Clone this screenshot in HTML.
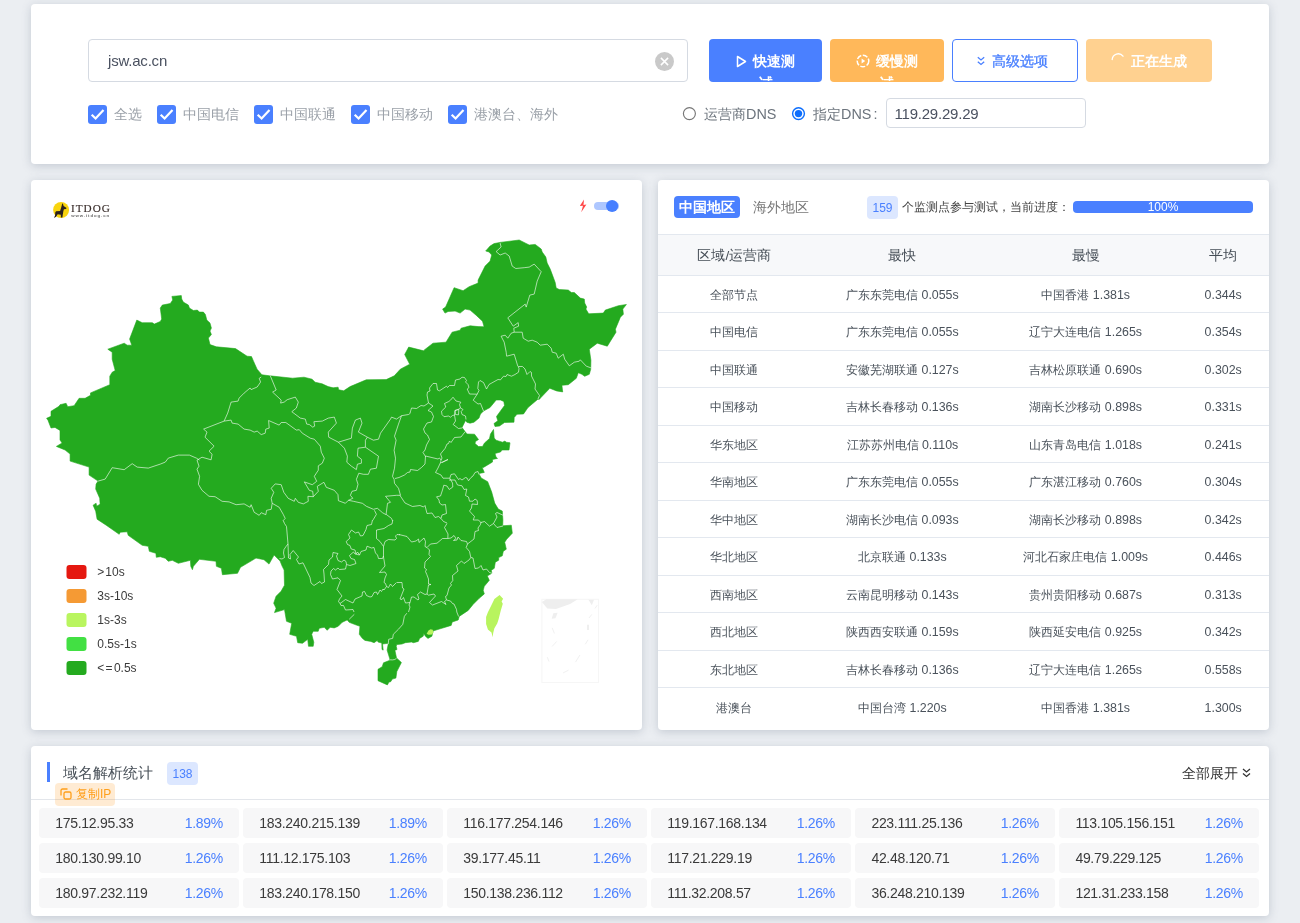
<!DOCTYPE html>
<html lang="zh">
<head>
<meta charset="utf-8">
<title>ITDOG DNS</title>
<style>
*{box-sizing:border-box;margin:0;padding:0}
html,body{width:1300px;height:923px;overflow:hidden}
body{background:#ebeef2;font-family:"Liberation Sans",sans-serif;color:#444;position:relative;font-size:14px}
.card{position:absolute;will-change:transform;background:#fff;border-radius:4px;box-shadow:0 2px 10px rgba(105,118,140,.30)}
.abs{position:absolute}
/* top card */
#top{left:31px;top:4px;width:1238px;height:160px}
.inp{position:absolute;border:1px solid #d5dae2;border-radius:4px;background:#fff}
#domain{left:57px;top:35px;width:600px;height:43px;font-size:15px;letter-spacing:-0.2px;line-height:42px;padding-left:19px;color:#4a5160}
#clear{position:absolute;left:566px;top:11.5px;width:19px;height:19px;border-radius:50%;background:#c9c9c9}
#clear svg{position:absolute;left:0;top:0}
.btn{position:absolute;top:35px;height:43px;border-radius:4px;overflow:hidden;text-align:center;font-size:14.4px;line-height:21px;padding-top:11px;color:#fff;font-weight:bold;border:1px solid transparent}
.cb{position:absolute;top:101px;width:19px;height:19px;border-radius:3px;background:#4a80ff}
.cb svg{position:absolute;left:0;top:0}
.cl{position:absolute;top:100px;line-height:21px;font-size:14.4px;color:#9aa0a8;white-space:nowrap}
.radio{position:absolute;top:103px;width:13px;height:13px;border-radius:50%;border:1px solid #777;background:#fff}
.radio.on{border:1px solid #1a73e8}
.radio.on:after{content:"";position:absolute;left:2px;top:2px;width:7px;height:7px;border-radius:50%;background:#1a73e8}
/* table card */
#tbl{left:658px;top:180px;width:611px;height:550px;overflow:hidden}
#map{left:31px;top:180px;width:611px;height:550px;overflow:hidden}
.th{position:absolute;left:0;top:54px;width:611px;height:42px;background:#f7f8fa;border-top:1px solid #e3e8ef;border-bottom:1px solid #e3e8ef;font-size:13.5px;line-height:42px;color:#444c55}
.tr{position:absolute;left:0;width:611px;border-bottom:1px solid #e3e8ef;font-size:12.4px;line-height:39px;color:#4a525b}
.c1,.c2,.c3,.c4{position:absolute;top:0;text-align:center;white-space:nowrap}
.c1{left:0;width:152.75px}.c2{left:152.75px;width:183.3px}.c3{left:336.05px;width:183.3px}.c4{left:519.35px;width:91.65px}
/* bottom card */
#bot{left:31px;top:746px;width:1238px;height:170px}
.ip{position:absolute;width:199.6px;height:30px;background:#f7f7f8;border-radius:4px;font-size:14px;letter-spacing:-0.3px;line-height:31px;color:#3a3a3a}
.ip b{position:absolute;left:16px;font-weight:normal}
.ip i{position:absolute;right:16px;font-style:normal;color:#4a80ff}
</style>
</head>
<body>

<!-- TOP CARD -->
<div class="card" id="top">
  <div class="inp" id="domain">jsw.ac.cn
    <div id="clear"><svg width="19" height="19" viewBox="0 0 19 19"><path d="M5.9 5.9 L13.1 13.1 M13.1 5.9 L5.9 13.1" stroke="#fff" stroke-width="1.5" fill="none"/></svg></div>
  </div>
  <div class="btn" style="left:678px;width:113px;background:#4a80ff">
    <svg width="11" height="13" viewBox="0 0 11 13" style="vertical-align:-2px;margin-right:6px"><path d="M1.5 1.5 L9.5 6.5 L1.5 11.5 Z" fill="none" stroke="#fff" stroke-width="1.5" stroke-linejoin="round"/></svg>快速测<span style="display:block;margin-top:1px">试</span>
  </div>
  <div class="btn" style="left:799px;width:114px;background:#ffb85a">
    <svg width="14" height="14" viewBox="0 0 14 14" style="vertical-align:-2px;margin-right:5.5px"><circle cx="7" cy="7" r="5.8" fill="none" stroke="#fff" stroke-width="1.5" stroke-dasharray="5 1.6"/><path d="M5.6 4.4 L9.2 7 L5.6 9.6 Z" fill="#fff"/></svg>缓慢测<span style="display:block;margin-top:1px">试</span>
  </div>
  <div class="btn" style="left:921px;width:126px;background:#fff;border-color:#4a80ff;color:#4a80ff;font-weight:normal;padding-right:5px;-webkit-text-stroke:0.3px #4a80ff">
    <svg width="8" height="10" viewBox="0 0 8 10" style="vertical-align:0px;margin-right:7px"><path d="M0.8 1.2 L4 4 L7.2 1.2 M0.8 5.7 L4 8.5 L7.2 5.7" fill="none" stroke="#4a80ff" stroke-width="1.3"/></svg>高级选项
  </div>
  <div class="btn" style="left:1055px;width:126px;background:#ffd190">
    <svg width="14" height="14" viewBox="0 0 14 14" style="vertical-align:-1px;margin-right:6px"><path d="M1.2 6.5 A6 6 0 0 1 12 3.2" fill="none" stroke="#fff" stroke-width="1.3" stroke-linecap="round"/></svg>正在生成
  </div>

  <div class="cb" style="left:57px"><svg width="19" height="19" viewBox="0 0 19 19"><path d="M3.7 9.7 L7.6 13.5 L15.5 4.9" stroke="#fff" stroke-width="2.2" fill="none"/></svg></div>
  <div class="cl" style="left:83px">全选</div>
  <div class="cb" style="left:126px"><svg width="19" height="19" viewBox="0 0 19 19"><path d="M3.7 9.7 L7.6 13.5 L15.5 4.9" stroke="#fff" stroke-width="2.2" fill="none"/></svg></div>
  <div class="cl" style="left:152px">中国电信</div>
  <div class="cb" style="left:223px"><svg width="19" height="19" viewBox="0 0 19 19"><path d="M3.7 9.7 L7.6 13.5 L15.5 4.9" stroke="#fff" stroke-width="2.2" fill="none"/></svg></div>
  <div class="cl" style="left:249px">中国联通</div>
  <div class="cb" style="left:320px"><svg width="19" height="19" viewBox="0 0 19 19"><path d="M3.7 9.7 L7.6 13.5 L15.5 4.9" stroke="#fff" stroke-width="2.2" fill="none"/></svg></div>
  <div class="cl" style="left:346px">中国移动</div>
  <div class="cb" style="left:417px"><svg width="19" height="19" viewBox="0 0 19 19"><path d="M3.7 9.7 L7.6 13.5 L15.5 4.9" stroke="#fff" stroke-width="2.2" fill="none"/></svg></div>
  <div class="cl" style="left:443px">港澳台、海外</div>

  <svg class="abs" style="left:651px;top:102px" width="15" height="15" viewBox="0 0 15 15"><circle cx="7.4" cy="7.6" r="6" fill="#fff" stroke="#767676" stroke-width="1.15"/></svg>
  <div class="cl" style="left:673px;color:#6b737c">运营商DNS</div>
  <svg class="abs" style="left:760px;top:102px" width="15" height="15" viewBox="0 0 15 15"><circle cx="7.5" cy="7.6" r="5.9" fill="#fff" stroke="#0d6efd" stroke-width="1.4"/><circle cx="7.5" cy="7.6" r="3.7" fill="#0d6efd"/></svg>
  <div class="cl" style="left:782px;color:#6b737c">指定DNS<span style="margin-left:2px">:</span></div>
  <div class="inp" style="left:855px;top:94px;width:200px;height:30px;font-size:15px;letter-spacing:-0.21px;line-height:29px;padding-left:7.5px;color:#4a5160">119.29.29.29</div>
</div>

<!-- MAP CARD -->
<div class="card" id="map">
<svg style="position:absolute;left:0;top:0" width="611" height="550" viewBox="31 180 611 550">
<path d="M60 430.4 L55 427.4 L51 428 L48 420.3 L46.6 418.3 L51 416.3 L51 411.3 L59 406.3 L60 404.7 L66.1 403.3 L67.7 406.7 L74.1 405.7 L79.1 398.3 L85.1 398.3 L90.5 395.3 L90.5 392.9 L109.8 384.7 L109.8 376.2 L112.2 372.2 L115.2 370.6 L112.2 359.2 L112.2 352.2 L107.8 349.2 L124.2 343.2 L127.2 345.2 L131.8 345.2 L129.6 339.1 L136.8 320.1 L142.2 322.7 L152.3 322.7 L154.3 324.1 L160.3 321.5 L161.7 319.1 L160.3 308.1 L162.3 305.1 L170.3 303.5 L172.7 300 L171.9 296.4 L181.3 295.6 L181.7 299 L183.3 302.1 L188.4 305.1 L189.4 308.1 L193.4 310.5 L197.4 310.1 L199.4 312.1 L203.4 312.1 L205.4 314.5 L206.8 320.1 L210 323.1 L211.4 328.1 L210 331.1 L211.4 334.5 L208.4 338.1 L210 344.6 L216.4 346.8 L235.5 348.6 L247.1 356.2 L251.5 356.6 L253.5 361.2 L257.1 369.2 L261.9 374.8 L269.6 375.8 L292.6 378.2 L304 377.2 L312.1 379.2 L315.1 382.2 L322.1 383.8 L328.1 386.6 L333.1 387.8 L338.1 387.2 L338.7 389.8 L343.7 390.8 L350.1 386.6 L366.2 379.8 L386.2 379.6 L394.3 375.8 L400.3 369.2 L409.7 364.2 L404.7 354.5 L408.7 347.1 L424.7 351.1 L424 350.2 L433 343.2 L446 342.2 L452.1 332.2 L460.1 330.2 L461.1 328.2 L470.1 325.8 L478.1 326.6 L484.1 326.8 L482.5 321.2 L476.1 315.2 L470.1 310.1 L465.1 309.1 L460.1 313.1 L455.1 311.1 L448.1 311.5 L445 313.1 L442.6 309.1 L445.6 307.1 L454.1 287.7 L463.1 290.7 L469.1 286.7 L478.1 283.1 L478.1 280.1 L485.1 266.1 L490.1 261.1 L491.7 255 L489.1 252 L485.7 251 L490.1 246 L494.1 243.6 L500.1 242.4 L519.2 240 L529.2 245 L535.2 244.4 L541.2 249 L542.2 252 L545.8 257 L547.2 263.1 L550.2 269.1 L553.2 277.1 L555.2 282.5 L556.2 288.1 L559.3 289.5 L568.3 290.1 L571.3 292.5 L574.3 292.5 L580.3 298.1 L584.3 299.1 L584.7 303.1 L586.7 307.1 L585.9 309.1 L588.7 313.8 L603.3 313.1 L605.3 310.1 L618.4 305.7 L626.4 304.5 L622.8 309.1 L623.4 314.2 L620.4 317.2 L615.4 329.2 L616 332.2 L607.3 346.2 L597.3 343.2 L589.3 349.2 L590.9 360.2 L590.7 369.3 L589.3 374.3 L584.7 376.3 L581.9 374.3 L578.3 372.7 L576.3 378.3 L568.3 384.7 L561.9 385.3 L562.7 391.9 L556.6 390.9 L549.8 388.3 L540.2 398.3 L540 399 L537.5 399.5 L528 407.5 L523.5 414 L517 414.2 L514.2 417.5 L514 422.2 L504.5 422.5 L499.5 426 L495 426.5 L494 423.5 L497.8 420.8 L496.5 416.5 L504.5 405.5 L503.8 401.5 L500.5 400 L496.2 400 L490 407.5 L483.5 411 L480.5 414 L479 418 L474 422.2 L470 423.2 L466.8 422.2 L465.5 420.5 L462 427.5 L465 431.5 L467 434 L474.5 434.2 L478.5 439.5 L475.5 441.5 L475 443.5 L478.5 446.5 L482.5 446.5 L484.5 443 L489.5 438.5 L490.5 434 L493.5 429.5 L494.2 438 L496 440.2 L502.5 442.2 L505 441 L506 442.2 L510 442.8 L509 450 L502 450 L500.5 452 L495 453.5 L496 457 L497.5 458.4 L492.5 459.4 L492.5 462 L483.5 467.4 L482.2 467.4 L484.3 472.4 L478.8 473.6 L481.2 478 L487.7 481.7 L491.7 492.1 L494.7 503.1 L498.3 509.1 L502.3 511.1 L502.9 520.1 L502.7 525.8 L511.3 525.2 L512.3 533.2 L506.7 539.2 L504.7 542.2 L506.3 549.2 L503.3 551.2 L502.3 555.8 L498.7 557.6 L498.7 560.2 L495.3 562.2 L494.3 568.3 L491.3 570.3 L491.9 573.3 L487.3 575.9 L489.3 580.3 L484.3 586.3 L483.2 590.3 L484.3 593.9 L479.2 598.3 L473.2 604.3 L468.2 610.4 L459.2 616.4 L458.2 620 L452.2 622 L451.2 625.4 L440.1 628.8 L433.7 630.8 L433.4 630.3 L432.4 634 L431.9 636.2 L428 638.4 L425.4 636.2 L423.8 633.5 L423.2 636.2 L419.6 638.4 L418.3 641.4 L413.4 642.7 L411.5 642 L405.3 642.7 L402 644 L396.8 644.6 L396.2 646.2 L397 649.5 L394.9 650.3 L396.5 657.9 L401.4 662.5 L396.8 671.6 L395.9 678.1 L392.3 679.1 L390.7 681.7 L389 682 L387.4 684.9 L378 680.7 L378 669.3 L382.2 666.7 L383.5 662.8 L389.4 660.5 L389.7 658.6 L387.1 650.1 L388.4 643.3 L382.5 644 L383.2 650.1 L382 649.5 L381.8 643 L378 642 L377.3 640.4 L374.1 642.7 L370.8 641.4 L365 640.4 L362.3 638.3 L359.3 634.3 L359.9 626.3 L354.3 624.3 L349.2 622.3 L347.2 619.9 L342.2 622.3 L338.2 626.3 L334.2 627.9 L330.2 627.3 L327.2 630.3 L324.2 627.3 L319.2 628.3 L318.2 631.3 L313.2 631.3 L311.7 634.3 L313.8 642.3 L313.2 646.3 L308.5 646.3 L307.7 639.3 L302.5 643.3 L297.7 642.7 L296.5 636.3 L289.7 634.3 L291.7 623.3 L286.5 621.3 L284.5 609.6 L274.5 612.6 L276.1 608.2 L273.7 603.2 L276.1 596.2 L281.1 591.2 L284.5 585.2 L284.1 570.1 L282.1 566.1 L280.1 561.1 L274.1 555.1 L269 564.1 L264 559.7 L256 558.1 L240.5 567.3 L237.5 573.3 L222.4 574.7 L221.4 568.3 L216.4 566.3 L216 561.3 L199.4 559.3 L193.4 566.3 L192.4 569.7 L190.8 566.3 L190.4 560.3 L178.3 563.3 L172.3 560.3 L168.3 561.3 L165.3 558.3 L160.3 556.7 L156.3 557.3 L155.9 553.3 L149.3 551.3 L148.3 546.3 L142.2 545.3 L128.2 535.3 L127.2 531.8 L120.2 532.2 L119.2 534.3 L106.2 525.2 L97.1 519.2 L95.7 511.2 L93.1 505.2 L96.1 503.2 L96.7 506.2 L100.1 504.2 L99.7 498.2 L95.7 489.1 L96.1 484.1 L98.1 481.1 L89.1 475.1 L89.1 467.1 L70.1 461.1 L70.1 454.1 L65.1 450 L56.4 446.4 L62.1 443 L60 440Z" fill="#24aa1f" stroke="#24aa1f" stroke-width="0.6" stroke-linejoin="round"/>
<path d="M270.2 375.6 L276.2 390 L272.6 392.1 L281.2 400.1 L280.6 403.1 L284.2 402.1 L287.2 399.7 L295.3 397.1 L298.3 402.1 L296.3 408.1 L291.8 411.7 L300.3 418.1 L305.3 419.1 L306.7 424.1 L309.3 424.5 L312.7 427.1 L314.7 426.1 L313.9 421.7 L322.3 421.1 L328.3 418.1 L334.3 417.1 L336.4 423.1 L328.3 432.1 L328.7 437.2 L338.4 442.2 M261.2 377 L259.2 378.4 L260.6 382 L257.2 387 L251.1 389.6 L250.1 388 L244.1 393.1 L239.1 398.1 L238.1 401.1 L231.1 402.1 L227.7 413.1 L224.1 421.1 M224.1 421.1 L203.6 429.1 L207 432.1 L205 437.2 L214.1 446.2 L209 451.2 L212.1 454.2 L211.1 459.8 L202 457.2 L197 460.2 M224.1 421.1 L231.1 420.1 L232.1 423.1 L238.1 424.1 L244.1 429.1 L250.1 430.1 L254.2 432.1 L257.2 431.1 L261.2 434.6 L265.2 433.2 L265.8 429.1 L269.2 428.1 L268.6 420.5 L279.2 425.1 L281.2 422.5 L285.8 422.5 L296.3 430.1 L299.3 429.7 L302.3 433.2 L310.3 438.2 L314.3 439.2 L320.3 446.2 L321.3 452.2 L324.3 458.2 L322.3 463.2 L318.3 465.8 L318.3 470.2 L314.3 476.3 L316.7 481.3 L312.3 484.7 L304.3 481.9 L309.3 490.3 L312.7 491.3 L313.3 496.7 M197 460.2 L199 466.2 L197 469.2 L199.6 476.3 L198.4 484.3 L202 490.3 L209 496.3 L215.1 496.7 L222.1 501.3 L229.1 501.9 L236.1 504.7 L244.1 503.9 L250.1 507.3 L251.1 504.7 L254.2 512.3 L259.2 515.3 L261.2 512.7 L265.8 514.7 L266.6 510.3 L271.2 509.3 L272.2 503.3 M272.2 503.3 L271.2 498.3 L273.8 492.3 L271.2 488.3 L275.2 483.9 L281.2 484.7 L283.8 492.3 L288.2 498.3 L294.3 501.3 L295.3 498.3 L298.3 502.3 L303.3 503.9 L308.3 501.3 L307.9 496.3 L313.3 496.7 M272.2 503.3 L279.2 507.3 L283.2 514.3 L285.2 518.4 L283.8 520 M313.3 496.7 L318.3 491.3 L317.3 486.3 L323.9 482.3 L326.3 487.3 L334.3 490.3 L338 494.7 L338.4 500.7 L345.4 503.3 L348.4 500.3 M365.4 447.2 L378.5 456.2 L376.4 468.2 L370.4 469.2 L368.4 474.3 L363.4 474.3 L358.8 473.2 L356.4 479.3 L358 484.3 L356.4 490.3 L352 491.3 L350.4 495.3 L352.8 498.3 L348.4 500.3 M338.4 442.2 L351.4 438.2 L352.4 428.1 L355.4 420.1 L360.4 418.1 L362 423.1 L358.4 432.1 L367.4 437.2 L365.4 440.2 L365.4 447.2 L358 448.2 L357.4 456.2 L361.4 459.2 L361.4 463.2 L357.4 464.2 L356.4 469.6 L351.4 466.2 L346.8 462.2 L347.4 456.2 L344.4 448.2 L338.4 442.2 M367.4 437.2 L373.4 440.2 L378.5 439.2 L380.5 433.2 L390.5 419.1 L391.5 417.1 L396.5 419.1 L401.5 415.7 M401.5 415.7 L398.5 424.1 L394.5 436.2 L396.1 440.2 L394.1 450.2 L395.5 458.2 L394.5 468.2 L392.5 476.3 L394.1 479.3 M401.5 415.7 L408.5 414.5 L410.5 413.1 M394.1 479.3 L394.5 483.3 L398.5 488.3 L400.5 495.3 M400.5 495.3 L396.5 495.3 L385.5 496.3 L390.5 502.3 L387.5 503.3 L386.1 514.3 L391.5 518.4 L392.5 520.8 M348.4 500.3 L353.4 501.3 L362.4 503.3 L366.4 506.3 L373.4 509.3 L377.4 508.3 L382.5 512.7 L386.1 514.7 M374.4 510.3 L376.4 514.3 L373.4 519.4 L372.8 520.4 M199.4 460.1 L196.4 458.1 L189.4 455.1 L178.3 455.1 L168.3 458.1 L165.3 462.1 L160.3 464.1 L148.3 468.1 L137.2 467.1 L132.2 463.7 L124.2 469.7 L112.2 467.7 L105.2 479.1 L98.1 481.1 M428.5 403 L433 406 L428 410.5 L431.5 412 L433.5 416.5 L431.5 422 L427 423 L423.5 429 L425 433 L427.5 435 L429.5 439.5 L426.5 445 L425 450 L423 452.5 L425.5 456.5 M428.5 403 L427 395 L427.5 392 L430 391 L429.5 388 L433 383.5 L436.5 383.5 L437.5 390 L439.5 390.8 L446.5 386.2 L447.5 387.5 L449.5 385.5 L454.5 385.5 L455.5 380 L460 379 L462 377.2 L464.5 377.5 L466.5 380.5 L465.5 382 L468 384.5 L469 387.5 L467.2 389 L469.5 394 L477.2 394.2 M477.2 394.2 L479 390.5 L477.8 388.5 L478.5 382 L480 380.5 L483.5 382.5 L486.5 389 L489 384.5 L498 379.5 L500.5 379.8 L503.5 376.2 L506 376.5 L507 374.5 L511.5 376.2 L515 374.5 L518.5 372.2 L519 368.5 L518.2 366.5 M477.2 394.2 L473.2 400.2 L478 404 L480.5 403.5 L483.5 411 M518.2 366.5 L522.5 366.5 L525 369 L527 374.5 L530 371.5 L531.5 372.5 L531.5 376 L535.5 384 L535 389 L539.5 395.5 L538 399 M453 397.2 L450.5 400.2 L448.8 401.5 L444.5 403.5 L445.8 407 L441.5 411.2 L442 414.5 L444 416.7 L448.5 416 L450.5 417.2 L452.5 415.5 L454.5 415 L455 410.5 L459 409 L460.5 408 L459.5 404.5 L460.8 402.2 L456 401 L453 397.2 M455 410.5 L458.8 409.5 L458.5 414.8 L455.5 414.5 L455 410.5 M460.5 408 L463 409.5 L461.2 411.5 L462 414.5 L465.5 416 L466 419.5 M454.5 415 L455.5 421 L453.2 424.5 L458.5 428.5 L462 428 M465 431.8 L461 437 L454.5 437.5 L451 442.5 L449.5 441 L448.5 443.5 L447 444 M410 413 L411.5 408 L416.5 408.5 L421 405.5 L424 406 L428.5 403 M500.1 243 L501.1 247 L496.1 251.6 L500.1 255 L505.2 253 L509.2 256 L512.2 266.1 L515.8 268.5 L524.2 267.7 L529.2 267.1 L534.2 264.1 L541.2 271.7 L537.2 281.1 L534.2 294.1 L529.8 295.1 L526.2 307.1 L525.2 304.1 L507.8 317.8 L513.2 326.2 L518.2 322.6 L518.6 326.2 L513.8 328.2 L514.2 332.2 M514.2 332.2 L522.2 332.2 L523.2 338.2 L528.2 341.2 L532.2 340.2 L537.2 342.2 L540.2 345.2 L547.2 344.2 L551.2 348.2 L552.2 352.2 L556.2 353.2 L558.2 358.2 L563.3 354.2 L564.7 359.2 L569.3 365.8 L574.3 362.2 L579.3 361.2 L580.3 359.8 L586.3 366.2 L590.9 367.8 M514.2 332.2 L511.2 333.2 L507.8 338.2 L505.2 335.2 L501.1 336.2 L504.2 342.2 L506.2 352.2 L506.6 356.2 L514.2 354.2 L517.8 366.2 M447 444 L445 448.5 L440.5 454 L442 458 L440.5 461.5 M440.5 463 L448 459.5 L442 462.5 M425.5 456 L438 459 L439.5 458 L441 460 M425.5 456 L425 464 L421.5 467.5 L417.5 470.5 L410.5 469.5 L410 472 L407.5 472.5 L404.5 475 L399 477.5 L395 478.5 M441 461.5 L438 468 L435.5 472.5 L441 475 L443 478.2 L449.8 478.2 M449.8 478.2 L451 474.5 L454.5 473.8 L458.5 479.5 L460 478.5 L462 480 L465.5 477.5 L467 478 L468.5 480.8 L471 477.5 L473 476 L475 472.5 L478 471.5 L479 474.5 M449.8 478.2 L452.5 483 L452.8 487 L449.2 489.5 L447 486 L443.8 485.2 L442.5 490 L440.5 496 L436.5 496.8 L439 500 L439.5 503 L442 505 L445.5 504.5 L446.5 513.5 L442 515 L441 518.5 L443.5 521.5 L447 523 M449 480 L455 480 L457.5 485 L462 485.8 L464 489.5 L466.8 489 L465.5 495.5 L468.5 497 L469.5 501.2 L473 501.2 L475 499 L477.2 500.5 L477.5 504.5 L472 504 L471.5 508 L469.5 511 L474.5 516.5 L473.2 520 L478.5 520 L480.8 522.5 M480.8 522.5 L484.5 521.5 L489.5 526.2 L493.5 523.5 L497 517 L495.5 513.5 L497 512.5 L503 515.2 M493.5 523.5 L497 527.5 L503 526 M400 495.5 L405 503 L412.5 506.5 L420 505.5 L423.5 507 L425 505.5 L427 513.5 L432 513 L435 517.5 L438.5 516.5 L441 518.5 M447 523.5 L444.5 527.5 L448 534 L447.8 538.5 M447.8 538.5 L451 538 L454 535.5 L456 538.5 L453.5 540.5 L457 540 L458 537 L461 540.5 L466.5 541.5 L467.5 544 M467.5 544 L474 539 L475 531.5 L478.5 530.5 L478 528 L480.5 524.5 L481 522 M467.5 544 L466.2 547.5 L469.5 551.5 L470.8 557.5 M470.8 557.5 L473 558 L475 568.5 L478.5 568 L481 565.5 L483 570 L486.5 569 L489.5 572.5 L492.5 573.5 M470.8 557.5 L469 560 L464 563.5 L461.5 561 L456.5 565.5 L458 571 L452.5 575.5 L452.8 580.5 L450.5 583.5 L451.5 585 L449 588 L447 595.5 L445.5 596.5 L446.5 600 M446.5 600 L450.5 601 L452.5 603.5 L454 604 L456.5 609.5 L456.8 612 L458.6 616.5 M446.5 600 L444.5 601.5 L446 604.5 L441.5 601.5 L432.5 605 L429.5 602.5 L435.5 596 L434 594 L428.5 595.2 L427 594 M427 594 L428.5 585 L431 584.5 L428.5 584 L428.5 579 L426.8 574.5 L425.5 571.5 L426.5 569.5 L424.5 568 L425 562 L430.5 556.5 L429 554.5 L429.5 550 L427 547.5 M427 547.5 L430.5 544 L437 543.2 L442.5 538.5 L447.8 538.5 M427 547.5 L425 546.5 L425.5 541.5 L424 538 L419 542.5 L418.5 539 L416 541 L411.5 542 L407 536.5 L399 534.5 M427 594 L425 594.5 L420.5 592 L417.5 594.5 L419 599 L418 600 L414 597 L411.5 597 L410 602.5 M410 602.5 L405.5 603 L403.5 597.5 L402 599.5 L400 599 L404 589 L402.5 588 L402 582.5 L397 582.5 M410 602.5 L409 605 L410 607 L408.5 612 M283 520 L284.5 523.5 L286.5 526.5 L288 544 L288.5 558 L290.5 559 L290 554.5 L293.2 550.5 L298.5 557 L296.5 559.5 L299 564 L303 562.8 L310 577.5 L311 583 L314 585.5 L320 581.5 L321.5 583.5 L324.5 582 L324 574 L323.5 569.5 L328.5 564.5 L329 560 L332.5 557 L333 552.5 L338 553.5 L336.5 556 L338 560.5 L341.5 562 L344 560 L346 561.5 L346.5 564.5 L350 565.5 L356 563.5 L354.5 559.5 L351 558.5 L349.5 555.5 L353.5 552 L355 554 L359.5 555 M288 544 L286 546.5 L284 549.5 L283.5 553 L284.5 557.5 L282 559 L279.5 558.5 M372.5 520 L371.5 524.5 L367 525.5 L366 529.5 L363 535.5 L360.5 536 L358.5 532 L355.5 533 L351.5 530 L348.5 534.5 L350 538 L346.2 541.5 L347.5 544.5 L350 545.5 L351.2 549 L355 550 L356 554 L357.5 552 L359.5 555 M359.5 555 L361 551.5 L366 550 L367 546.2 L371.5 548 L374 547.5 L375.5 553 L377.5 555 L378.5 558.5 L382.5 558.5 L383.5 556 M383.5 546.5 L383.5 557 M383.5 546.5 L380 541.5 L376.5 538.5 L376.5 530 L379 529.5 L384 528.5 L388.5 525.5 L392 524 L392.8 520 M383.5 546.5 L385 541.5 L388.5 539.5 L395 540 L396.5 538.5 L395.5 536 L397 534.5 L400 534.8 M383.5 557 L385 566 L379.5 572.5 L385 572 L386.5 574.5 L385 578 L384 582.5 L385.5 583.5 L386.5 586.5 M386.5 586.5 L388.5 587.5 L390.5 584 L392.5 586.5 L396.5 582.5 M386.5 586.5 L384 590 L383 589 L381.5 591.5 L380 590 L378.5 593 L377.5 594.5 L376.5 592 L374 592.5 L372 596.5 L370 597 L366.5 595.5 L364.5 591.5 L362.5 592 L362 596 L355 599 L353 603 L345.5 599.5 L340 603.5 M346.5 564.5 L345.5 569 L339.5 569.5 L338 568 L335.5 570 L333.5 568.5 L331 571 L330.5 574.5 L332.5 579 L338 577.8 L340.5 580.5 L337 589.5 L342 596 L339.5 599 L338.5 601.5 L340 603.5 M340 603.5 L341 605.5 L343.5 605.5 L345.5 610 L353 609.5 L354 612 M354.3 614.3 L349.2 619.3 M406.8 613.2 L404.4 616.3 L402.8 624.3 L398.4 629.3 L393.3 634.3 L392.7 638.3 L388.7 639.3 L388.3 643.9 M389.2 659.8 L392.5 659.9 L394.8 659.5 L396.4 658.4" fill="none" stroke="#fff" stroke-opacity="0.72" stroke-width="0.85" stroke-linejoin="round"/>
<path d="M499.6 595.1 L503.1 598.8 L501.6 601.5 L502.8 603.8 L500.8 610.4 L498.6 619.3 L497.2 623.5 L494.4 628.3 L493.2 633 L492.6 637.2 L491.5 632.4 L487.9 629.5 L486.1 624.1 L486.1 616.9 L487.9 612.2 L491.5 605 L494.4 599.1Z" fill="#b8f45e"/>
<path d="M426.6 633.8 L428.5 630.5 L430.5 629.3 L432.8 629.8 L433.3 632.5 L432 634.6 L428.5 634.8Z" fill="#b8f45e"/>
</svg>
<svg style="position:absolute;left:0;top:0" width="611" height="550" viewBox="31 180 611 550">
<rect x="541.9" y="599.3" width="56.6" height="83.2" fill="none" stroke="#f6f6f6" stroke-width="1"/>
<polygon points="541.9,601.9 546.3,599.2 577.7,599.2 570.1,604.1 556,609 547.3,608.4" fill="#eeeeee"/>
<polygon points="588.5,599.8 594,599.8 591.8,605.2" fill="#eeeeee"/>
<polygon points="551.7,618.7 553.3,613.3 557.6,612.8 555.5,618.2" fill="#efefef"/>
<path d="M552.2 627.9L554.4 633.4M556.6 641.5L552.2 646.4M547.3 657.2L549 661.5M563.1 672.9L568.5 670.2M579.9 655L575.5 662.1M588 639.9L585.3 644.2M595 608.4L597.2 605.2M589 618L591.8 614.4" stroke="#f1f1f1" stroke-width="1" fill="none"/>
<path d="M588 624.7L588 630.1" stroke="#efefef" stroke-width="2" fill="none"/>
<circle cx="61.1" cy="210" r="8" fill="#f8d40e"/>
<polygon points="62.8,203.3 63.6,206.0 66.6,208.0 66.0,208.9 63.9,209.2 63.3,211.6 62.8,214.6 62.4,217.5 60.9,217.6 60.8,214.8 57.7,214.3 56.1,216.7 54.0,218.0 55.0,215.4 55.3,212.2 56.1,211.3 60.1,211.1 61.2,207.6 62.1,204.1" fill="#2b211c"/>
<text x="70.9" y="212.3" font-family="Liberation Serif, serif" font-size="11.2" letter-spacing="1.05" fill="#3a2e2c" stroke="#3a2e2c" stroke-width="0.15">ITDOG</text>
<text x="71.2" y="216.8" font-family="Liberation Sans, sans-serif" font-weight="bold" font-size="4.3" letter-spacing="0.93" fill="#666">www.itdog.cn</text>
<path d="M584 199.4L579.8 205.9L583 205.7L581.2 212.2L586.4 204.6L583.5 204.9Z" fill="#ff4848"/>
<rect x="594" y="202" width="25" height="8" rx="4" fill="#aec7ff"/>
<circle cx="612.1" cy="206" r="6.1" fill="#467fff"/>
<rect x="66.5" y="565" width="20" height="14" rx="3" fill="#e51810"/>
<rect x="66.5" y="589" width="20" height="14" rx="3" fill="#f59a34"/>
<rect x="66.5" y="613" width="20" height="14" rx="3" fill="#b9f55f"/>
<rect x="66.5" y="637" width="20" height="14" rx="3" fill="#42e043"/>
<rect x="66.5" y="661" width="20" height="14" rx="3" fill="#24aa1f"/>
</svg>
<div class="abs" style="left:66.3px;top:384.5px;font-size:12px;line-height:14px;color:#3a3a3a;white-space:nowrap"><span style="letter-spacing:1px">&gt;</span>10s</div>
<div class="abs" style="left:66.3px;top:408.5px;font-size:12px;line-height:14px;color:#3a3a3a;white-space:nowrap">3s-10s</div>
<div class="abs" style="left:66.3px;top:432.5px;font-size:12px;line-height:14px;color:#3a3a3a;white-space:nowrap">1s-3s</div>
<div class="abs" style="left:66.3px;top:456.5px;font-size:12px;line-height:14px;color:#3a3a3a;white-space:nowrap">0.5s-1s</div>
<div class="abs" style="left:66.3px;top:480.5px;font-size:12px;line-height:14px;color:#3a3a3a;white-space:nowrap"><span style="letter-spacing:1.3px">&lt;=</span>0.5s</div>

</div>

<!-- TABLE CARD -->
<div class="card" id="tbl">
  <div class="abs" style="left:16px;top:16px;width:66px;height:22px;border-radius:4px;background:#4a80ff;color:#fff;font-weight:bold;font-size:14.4px;line-height:22px;text-align:center">中国地区</div>
  <div class="abs" style="left:94.5px;top:16px;font-size:14.4px;line-height:22px;color:#777">海外地区</div>
  <div class="abs" style="left:209px;top:16px;width:31px;height:23px;border-radius:4px;background:#dce7ff;color:#4a80ff;font-size:12px;line-height:24px;text-align:center">159</div>
  <div class="abs" style="left:244px;top:16px;font-size:12px;line-height:23px;color:#444;white-space:nowrap">个监测点参与测试，当前进度：</div>
  <div class="abs" style="left:415px;top:21px;width:180px;height:12px;border-radius:4px;background:#4a80ff;color:#fff;font-size:12px;line-height:12px;text-align:center">100%</div>
  <div class="th"><div class="c1">区域/运营商</div><div class="c2">最快</div><div class="c3">最慢</div><div class="c4">平均</div></div>
  <div class="tr" style="top:96px;height:37px"><div class="c1">全部节点</div><div class="c2">广东东莞电信 0.055s</div><div class="c3">中国香港 1.381s</div><div class="c4">0.344s</div></div>
  <div class="tr" style="top:133px;height:38px"><div class="c1">中国电信</div><div class="c2">广东东莞电信 0.055s</div><div class="c3">辽宁大连电信 1.265s</div><div class="c4">0.354s</div></div>
  <div class="tr" style="top:171px;height:37px"><div class="c1">中国联通</div><div class="c2">安徽芜湖联通 0.127s</div><div class="c3">吉林松原联通 0.690s</div><div class="c4">0.302s</div></div>
  <div class="tr" style="top:208px;height:38px"><div class="c1">中国移动</div><div class="c2">吉林长春移动 0.136s</div><div class="c3">湖南长沙移动 0.898s</div><div class="c4">0.331s</div></div>
  <div class="tr" style="top:246px;height:37px"><div class="c1">华东地区</div><div class="c2">江苏苏州电信 0.110s</div><div class="c3">山东青岛电信 1.018s</div><div class="c4">0.241s</div></div>
  <div class="tr" style="top:283px;height:38px"><div class="c1">华南地区</div><div class="c2">广东东莞电信 0.055s</div><div class="c3">广东湛江移动 0.760s</div><div class="c4">0.304s</div></div>
  <div class="tr" style="top:321px;height:37px"><div class="c1">华中地区</div><div class="c2">湖南长沙电信 0.093s</div><div class="c3">湖南长沙移动 0.898s</div><div class="c4">0.342s</div></div>
  <div class="tr" style="top:358px;height:38px"><div class="c1">华北地区</div><div class="c2">北京联通 0.133s</div><div class="c3">河北石家庄电信 1.009s</div><div class="c4">0.446s</div></div>
  <div class="tr" style="top:396px;height:37px"><div class="c1">西南地区</div><div class="c2">云南昆明移动 0.143s</div><div class="c3">贵州贵阳移动 0.687s</div><div class="c4">0.313s</div></div>
  <div class="tr" style="top:433px;height:38px"><div class="c1">西北地区</div><div class="c2">陕西西安联通 0.159s</div><div class="c3">陕西延安电信 0.925s</div><div class="c4">0.342s</div></div>
  <div class="tr" style="top:471px;height:37px"><div class="c1">东北地区</div><div class="c2">吉林长春移动 0.136s</div><div class="c3">辽宁大连电信 1.265s</div><div class="c4">0.558s</div></div>
  <div class="tr" style="top:508px;height:42px;border-bottom:none;line-height:41px"><div class="c1">港澳台</div><div class="c2">中国台湾 1.220s</div><div class="c3">中国香港 1.381s</div><div class="c4">1.300s</div></div>
</div>

<!-- BOTTOM CARD -->
<div class="card" id="bot">
  <div class="abs" style="left:16px;top:16px;width:3px;height:20px;background:#4a80ff"></div>
  <div class="abs" style="left:31.5px;top:15px;font-size:15.4px;line-height:23px;color:#485058">域名解析统计</div>
  <div class="abs" style="left:136px;top:16px;width:31px;height:23px;border-radius:4px;background:#dce7ff;color:#4a80ff;font-size:12px;line-height:25px;text-align:center">138</div>
  <div class="abs" style="left:0;top:53px;width:1238px;height:1px;background:#e3e6eb"></div>
  <div class="abs" style="left:24px;top:37px;width:60px;height:23px;border-radius:4px;background:rgba(255,150,20,.19);color:#ff9f1a;font-size:12px;line-height:23px;white-space:nowrap">
    <svg width="12" height="12" viewBox="0 0 12 12" style="position:absolute;left:5px;top:5px"><rect x="4" y="4" width="7" height="7" rx="1.5" fill="none" stroke="#ff9f1a" stroke-width="1.3"/><path d="M1 7.5 V2.5 A1.5 1.5 0 0 1 2.5 1 H7.5" fill="none" stroke="#ff9f1a" stroke-width="1.3"/></svg>
    <span style="position:absolute;left:21px;top:0">复制IP</span>
  </div>
  <div class="abs" style="left:1151px;top:16px;font-size:14.4px;line-height:22px;color:#333;white-space:nowrap">全部展开</div>
  <svg class="abs" style="left:1211px;top:22px" width="9" height="10" viewBox="0 0 9 10"><path d="M1 1 L4.5 4 L8 1 M1 5.5 L4.5 8.5 L8 5.5" fill="none" stroke="#333" stroke-width="1.3"/></svg>

  <div class="ip" style="left:8.3px;top:62px"><b>175.12.95.33</b><i>1.89%</i></div>
  <div class="ip" style="left:212.3px;top:62px"><b>183.240.215.139</b><i>1.89%</i></div>
  <div class="ip" style="left:416.3px;top:62px"><b>116.177.254.146</b><i>1.26%</i></div>
  <div class="ip" style="left:620.3px;top:62px"><b>119.167.168.134</b><i>1.26%</i></div>
  <div class="ip" style="left:824.4px;top:62px"><b>223.111.25.136</b><i>1.26%</i></div>
  <div class="ip" style="left:1028.4px;top:62px"><b>113.105.156.151</b><i>1.26%</i></div>

  <div class="ip" style="left:8.3px;top:97px"><b>180.130.99.10</b><i>1.26%</i></div>
  <div class="ip" style="left:212.3px;top:97px"><b>111.12.175.103</b><i>1.26%</i></div>
  <div class="ip" style="left:416.3px;top:97px"><b>39.177.45.11</b><i>1.26%</i></div>
  <div class="ip" style="left:620.3px;top:97px"><b>117.21.229.19</b><i>1.26%</i></div>
  <div class="ip" style="left:824.4px;top:97px"><b>42.48.120.71</b><i>1.26%</i></div>
  <div class="ip" style="left:1028.4px;top:97px"><b>49.79.229.125</b><i>1.26%</i></div>

  <div class="ip" style="left:8.3px;top:132px"><b>180.97.232.119</b><i>1.26%</i></div>
  <div class="ip" style="left:212.3px;top:132px"><b>183.240.178.150</b><i>1.26%</i></div>
  <div class="ip" style="left:416.3px;top:132px"><b>150.138.236.112</b><i>1.26%</i></div>
  <div class="ip" style="left:620.3px;top:132px"><b>111.32.208.57</b><i>1.26%</i></div>
  <div class="ip" style="left:824.4px;top:132px"><b>36.248.210.139</b><i>1.26%</i></div>
  <div class="ip" style="left:1028.4px;top:132px"><b>121.31.233.158</b><i>1.26%</i></div>
</div>

</body>
</html>
